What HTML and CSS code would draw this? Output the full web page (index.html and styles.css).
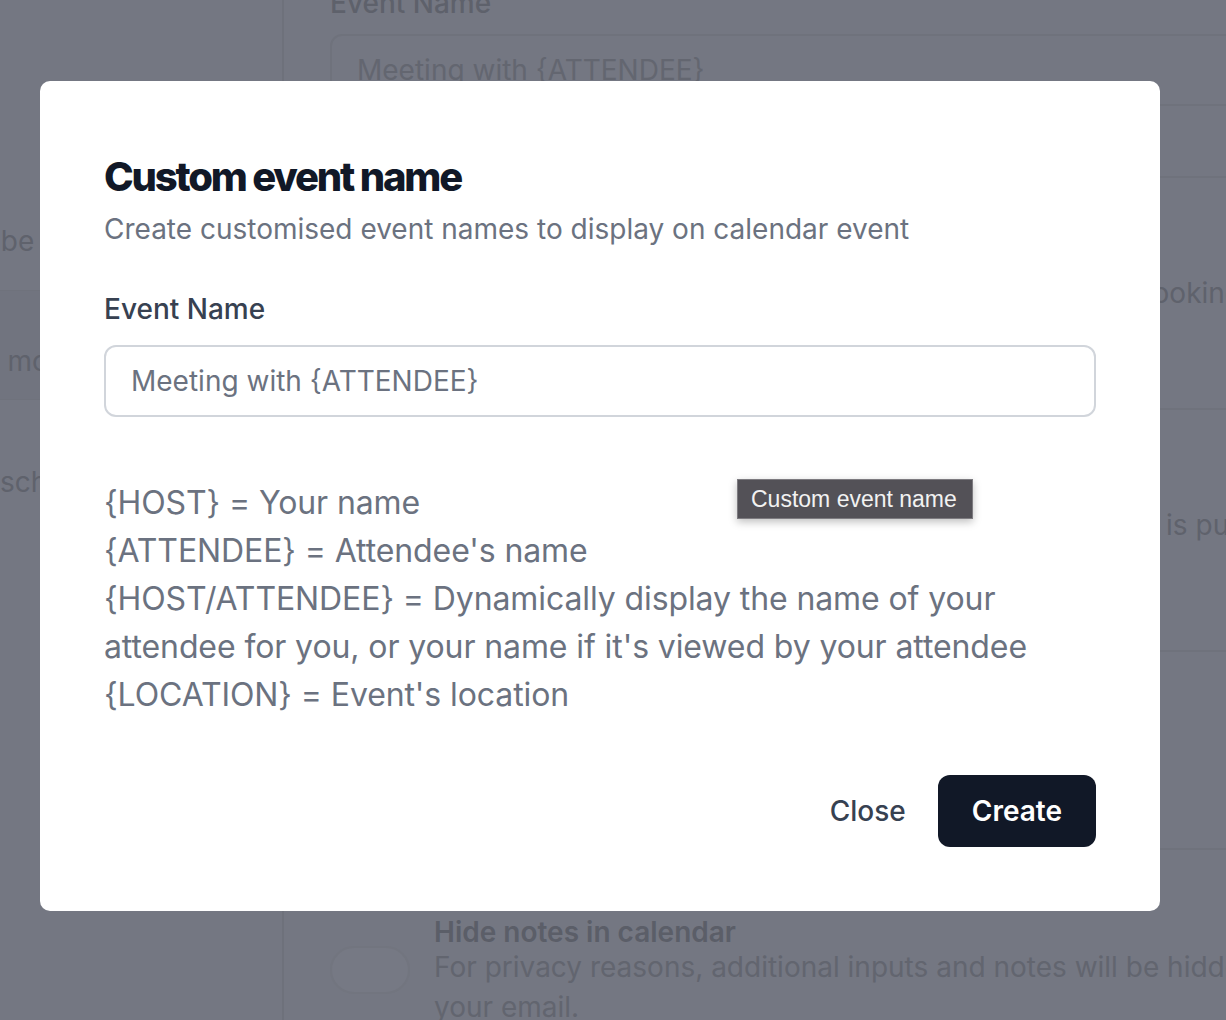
FILE: index.html
```html
<!DOCTYPE html>
<html>
<head>
<meta charset="utf-8">
<link rel="stylesheet" href="styles.css">
</head>
<body>
<div class="page">
  <aside class="sidebar">
    <div class="side-item s1"><span class="side-text">Will be listed</span></div>
    <div class="side-item s2 active"><span class="side-text">Same mode</span></div>
    <div class="side-item s3"><span class="side-text">Reschedule</span></div>
  </aside>
  <main class="main">
    <div class="bg-label">Event Name</div>
    <div class="bg-input">Meeting with {ATTENDEE}</div>
    <div class="bg-row r1"></div>
    <div class="bg-row r2"><span class="bg-text">Requires booking</span></div>
    <div class="bg-row r3"><span class="bg-text">This is pushed</span></div>
    <div class="bg-row r4"></div>
    <div class="bg-toggle-row">
      <div class="bg-toggle"></div>
      <div class="bg-toggle-text">
        <div class="bg-toggle-title">Hide notes in calendar</div>
        <div class="bg-toggle-desc">For privacy reasons, additional inputs and notes will be hidden in the calendar entry. They will still be sent to<br>your email.</div>
      </div>
    </div>
  </main>
</div>

<div class="backdrop">
  <div class="modal">
    <h1 class="title">Custom event name</h1>
    <p class="subtitle">Create customised event names to display on calendar event</p>
    <label class="field-label">Event Name</label>
    <div class="input">Meeting with {ATTENDEE}</div>
    <div class="vars">
      <div>{HOST} = Your name</div>
      <div>{ATTENDEE} = Attendee's name</div>
      <div>{HOST/ATTENDEE} = Dynamically display the name of your attendee for you, or your name if it's viewed by your attendee</div>
      <div>{LOCATION} = Event's location</div>
    </div>
    <div class="footer">
      <button class="btn-close">Close</button>
      <button class="btn-create">Create</button>
    </div>
  </div>
  <div class="tooltip">Custom event name</div>
</div>
</body>
</html>
```

FILE: styles.css
```css
* { box-sizing: border-box; }
html, body {
  margin: 0;
  padding: 0;
  width: 1226px;
  height: 1020px;
  overflow: hidden;
  background: #747782;
  font-family: Inter, "Noto Sans", sans-serif;
}

/* background page (already dimmed) */
.page {
  display: flex;
  height: 1020px;
  color: #5f626c;
}
.sidebar {
  width: 284px;
  flex-shrink: 0;
  border-right: 2px solid #6e717b;
  padding-top: 178px;
}
.side-item {
  font-size: 28px;
  line-height: 34px;
  white-space: nowrap;
  overflow: hidden;
}
.side-item.s1 { height: 112px; padding-top: 46px; }
.side-item.s2 { height: 110px; padding-top: 53px; border-top: 1px solid #6f727c; border-bottom: 1px solid #6f727c; background: #71747f; }
.side-item.s3 { height: 126px; padding-top: 65px; }
.side-text { display: inline-block; }
.s1 .side-text { margin-left: -55px; }
.s2 .side-text { margin-left: -75px; }
.s3 .side-text { margin-left: -34px; }

.main {
  flex: 1;
  padding-left: 46px;
  margin-top: -14px;
  overflow: hidden;
}
.bg-label {
  font-size: 28px;
  font-weight: 500;
  line-height: 34px;
  height: 48px;
  color: #5e616b;
}
.bg-input {
  width: 940px;
  height: 72px;
  border: 2px solid #6f727c;
  border-radius: 12px;
  padding-left: 25px;
  font-size: 28px;
  line-height: 68px;
  color: #636670;
}
.bg-row {
  border-bottom: 2px solid #6f727c;
  width: 900px;
  display: flex;
  align-items: center;
  justify-content: flex-end;
  font-size: 28px;
}
.r1 { height: 72px; }
.r2 { height: 232px; }
.r3 { height: 242px; }
.r4 { height: 198px; }
.bg-text { color: #5f626c; white-space: nowrap; position: relative; }
.r2 .bg-text { top: 0; margin-right: -12px; }
.r3 .bg-text { top: -5px; margin-right: -64px; }

.bg-toggle-row {
  display: flex;
  gap: 24px;
  padding-top: 64px;
}
.bg-toggle {
  width: 80px;
  height: 48px;
  border-radius: 24px;
  background: #767984;
  border: 2px solid #72757f;
  flex-shrink: 0;
  margin-top: 32px;
}
.bg-toggle-text { width: 1200px; }
.bg-toggle-title {
  font-size: 28px;
  font-weight: 600;
  line-height: 36px;
  color: #5b5e68;
}
.bg-toggle-desc {
  font-size: 28px;
  line-height: 40px;
  color: #62656f;
  white-space: nowrap;
  margin-top: -3px;
}

/* overlay + modal */
.backdrop {
  position: fixed;
  inset: 0;
  padding: 81px 0 0 40px;
}
.modal {
  width: 1120px;
  height: 830px;
  background: #fff;
  border-radius: 10px;
  padding: 70px 64px 64px;
  display: flex;
  flex-direction: column;
}
.title {
  margin: 0;
  font-size: 40px;
  font-weight: 800;
  letter-spacing: -0.055em;
  line-height: 52px;
  color: #111827;
}
.subtitle {
  margin: 6px 0 0;
  font-size: 28px;
  line-height: 40px;
  color: #6b7280;
}
.field-label {
  display: block;
  margin-top: 40px;
  font-size: 28px;
  font-weight: 500;
  line-height: 40px;
  color: #374151;
}
.input {
  margin-top: 16px;
  height: 72px;
  border: 2px solid #d1d5db;
  border-radius: 12px;
  padding-left: 25px;
  font-size: 28px;
  line-height: 68px;
  color: #6b7280;
}
.vars {
  margin-top: 62px;
  font-size: 32px;
  line-height: 48px;
  color: #6b7280;
  letter-spacing: -0.1px;
}
.footer {
  margin-top: auto;
  display: flex;
  justify-content: flex-end;
}
.btn-close, .btn-create {
  font-family: Inter, "Noto Sans", sans-serif;
  font-size: 28px;
  font-weight: 500;
  height: 72px;
  border: none;
  cursor: pointer;
}
.btn-close {
  background: transparent;
  color: #374151;
  padding: 0 32px;
}
.btn-create {
  background: #111827;
  color: #fff;
  border-radius: 12px;
  padding: 0 34px;
  font-weight: 600;
}

.tooltip {
  position: absolute;
  left: 737px;
  top: 479px;
  width: 236px;
  height: 40px;
  background: #535157;
  border: 1px solid #7d7b80;
  color: #f2f2f2;
  font-family: "Liberation Sans", Arial, sans-serif;
  font-size: 23px;
  line-height: 38px;
  padding-left: 13px;
  box-shadow: 0 3px 8px rgba(0,0,0,0.25);
}
```
